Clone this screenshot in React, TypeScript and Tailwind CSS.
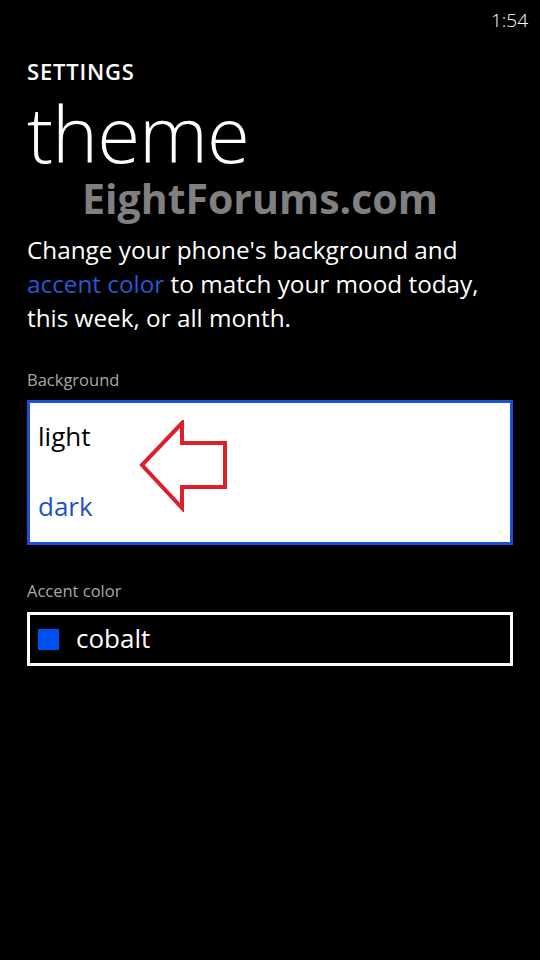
import React from "react";

const font = { fontFamily: '"Open Sans", "Noto Sans", sans-serif' };

function ArrowMark() {
  // red outline arrow pasted over the list
  return (
    <svg className="absolute left-[108px] top-[17px]" width="92" height="92" viewBox="0 0 92 92">
      <path
        d="M44 3 L44 23 L87 23 L87 67 L44 67 L44 88 L4 45 Z"
        fill="none"
        stroke="#dc1f2a"
        strokeWidth="4"
        strokeLinejoin="miter"
      />
    </svg>
  );
}

export default function App() {
  return (
    <div className="w-[540px] h-[960px] bg-black text-white overflow-hidden" style={font}>
      <div className="flex justify-end pr-[12px] pt-[6px] h-[34px] text-[19px] font-light text-white">1:54</div>

      <div className="px-[27px]">
        <div className="mt-[23px] text-[22px] font-semibold leading-[28px] tracking-[0.8px]">SETTINGS</div>
        <div className="mt-[8px] text-[78px] font-light leading-[80px] tracking-[-1px]">theme</div>

        <div className="flex justify-center pr-[20px] mt-[2px]">
          <span className="text-[41px] font-bold text-[#808080] leading-[46px]">EightForums.com</span>
        </div>

        <p className="mt-[12px] w-[470px] text-[24.3px] leading-[34px]">
          Change your phone's background and <span className="text-[#2559d6]">accent color</span> to match your mood today,
          this week, or all month.
        </p>

        <div className="mt-[34px] text-[16.5px] text-[#a8a8a8] leading-[22px]">Background</div>
        <div className="relative mt-[9px] h-[145px] border-[3px] border-[#1a52d6] bg-white flex flex-col justify-between px-[8px] pt-[18px] pb-[21px]">
          <span className="text-[26px] text-black leading-[30px]">light</span>
          <span className="text-[26px] text-[#1e51c8] leading-[30px]">dark</span>
          <ArrowMark />
        </div>

        <div className="mt-[35px] text-[16.5px] text-[#a8a8a8] leading-[22px]">Accent color</div>
        <div className="mt-[10px] h-[54px] border-[3px] border-white flex items-center gap-[17px] px-[8px]">
          <span className="w-[21px] h-[21px] bg-[#0050ef]" />
          <span className="text-[26px] leading-[30px] pb-[2px]">cobalt</span>
        </div>
      </div>
    </div>
  );
}
